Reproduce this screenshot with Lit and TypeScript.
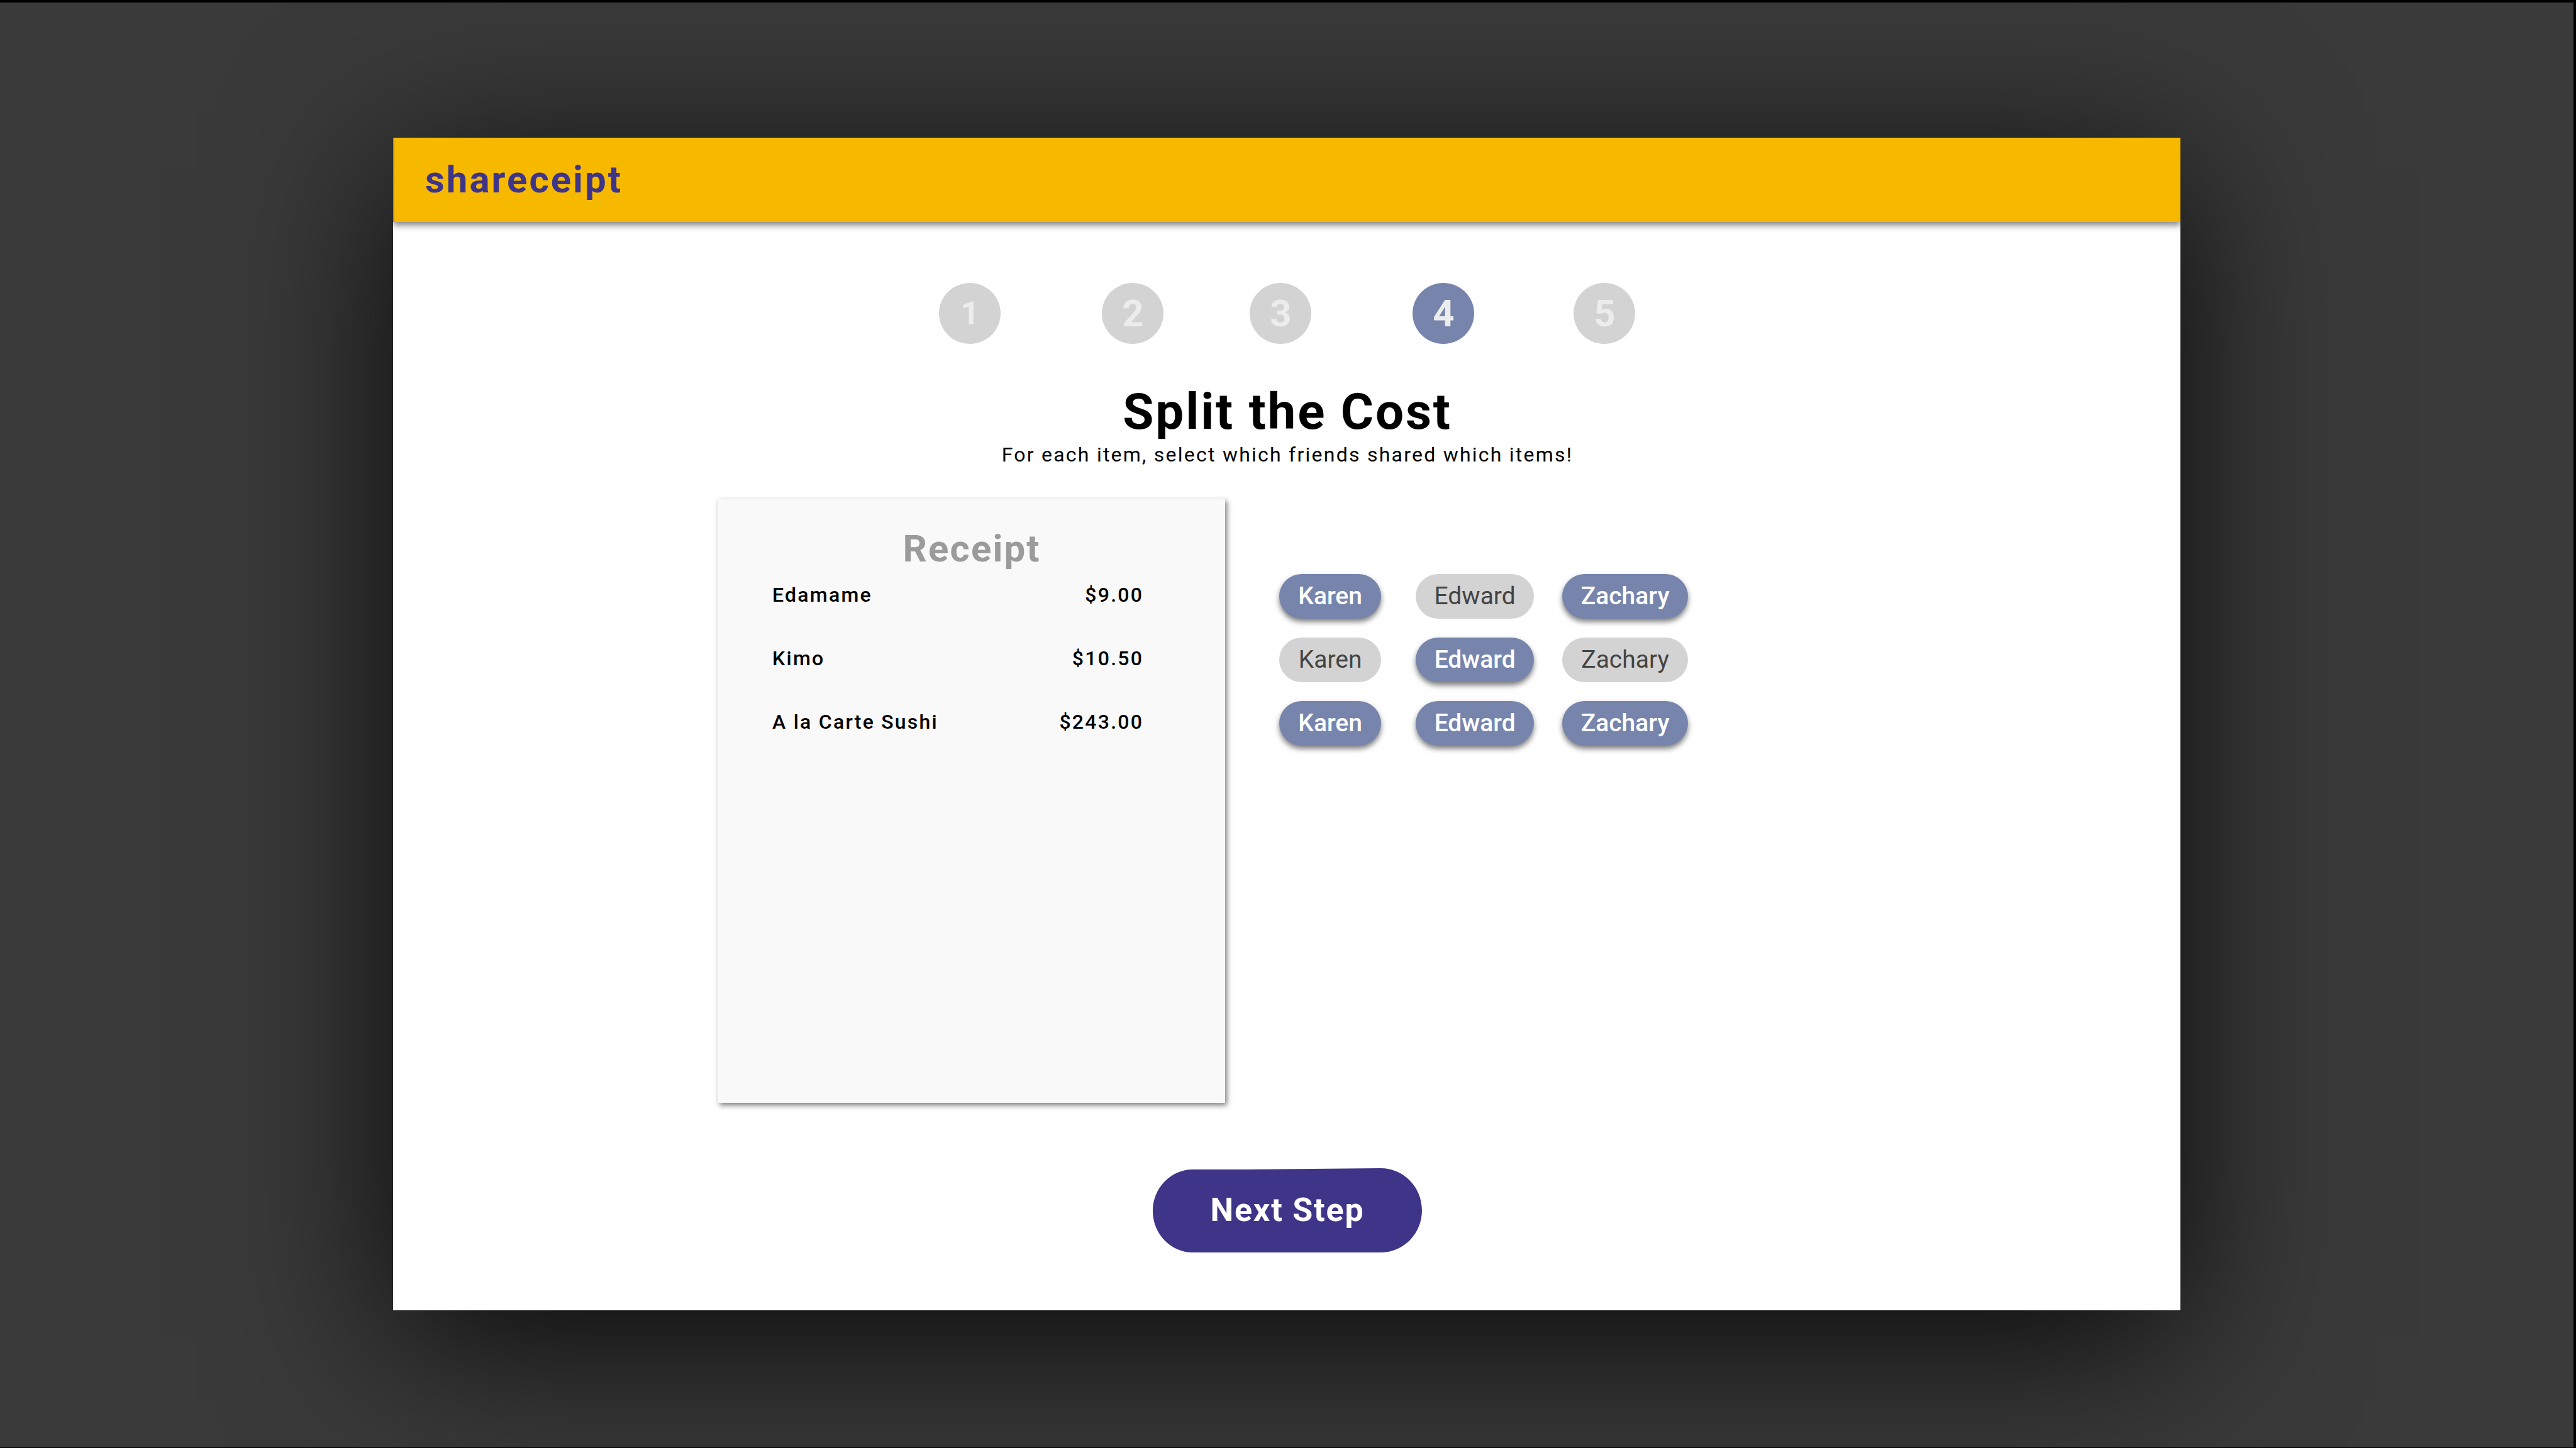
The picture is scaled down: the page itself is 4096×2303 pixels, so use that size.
import { LitElement, html, css } from "lit";
import { customElement, state } from "lit/decorators.js";
import { classMap } from "lit/directives/class-map.js";

interface ReceiptItem {
  name: string;
  price: string;
  sharedBy: string[];
}

const FRIENDS = ["Karen", "Edward", "Zachary"];
const STEPS = [1, 2, 3, 4, 5];

@customElement("app-root")
export class AppRoot extends LitElement {
  static styles = css`
    :host {
      display: block;
      font-family: Roboto, "Liberation Sans", sans-serif;
      color: #000;
    }

    * {
      box-sizing: border-box;
    }

    h1,
    h2,
    p,
    ol {
      margin: 0;
      padding: 0;
    }

    .backdrop {
      display: flex;
      flex-direction: column;
      align-items: center;
      min-height: 100vh;
      padding: 215px 0 218px;
      border: solid #000;
      border-width: 4px 4px 1px 0;
      background: #3a3a3a;
      overflow: hidden;
    }

    .window {
      display: flex;
      flex-direction: column;
      flex: 1;
      width: 69.45%;
      background: #fff;
      box-shadow: 0 50px 340px rgba(0, 0, 0, 0.85);
    }

    .bar {
      display: flex;
      align-items: center;
      height: 134px;
      padding: 0 49px;
      border-left: 2px solid #b88b07;
      background: #f7b900;
      box-shadow: 0 5px 10px rgba(0, 0, 0, 0.5);
      clip-path: inset(0 0 -30px 0);
    }

    .logo {
      font-size: 60px;
      line-height: 72px;
      font-weight: 700;
      letter-spacing: 0.05em;
      color: #3e3589;
      text-decoration: none;
    }

    .page {
      display: flex;
      flex-direction: column;
      flex: 1;
      align-items: center;
      padding: 97px 0 92px 2px;
    }

    .steps {
      display: grid;
      grid-template-columns: 259px 235px 259px 256px 98px;
      list-style: none;
    }

    .step {
      display: flex;
      align-items: center;
      justify-content: center;
      width: 98px;
      height: 97px;
      border-radius: 50%;
      background: #d3d3d3;
      color: #ececec;
      font-size: 60px;
      line-height: 72px;
      font-weight: 700;
    }

    .step.first {
      font-size: 52px;
    }

    .step.current {
      background: #7785ad;
    }

    .title {
      margin-top: 60px;
      font-size: 80px;
      line-height: 96px;
      font-weight: 700;
      letter-spacing: 0.035em;
    }

    .hint {
      font-size: 32px;
      line-height: 40px;
      letter-spacing: 0.07em;
    }

    .split {
      display: grid;
      grid-template-columns: 34.7% auto;
      justify-content: start;
      column-gap: 86px;
      flex: 1;
      width: 100%;
      margin-top: 50px;
      padding-left: 18.1%;
    }

    .receipt {
      padding: 44px 130px 44px 87px;
      background: #f9f9f9;
      box-shadow: 3px 4px 8px rgba(0, 0, 0, 0.5);
    }

    .receipt-title {
      margin-right: -44px;
      font-size: 60px;
      line-height: 72px;
      font-weight: 700;
      letter-spacing: 0.035em;
      text-align: center;
      color: #9b9b9b;
    }

    .items {
      width: 100%;
      margin-top: 17px;
      border-collapse: collapse;
      font-size: 32px;
      line-height: 40px;
      letter-spacing: 0.07em;
    }

    .items th,
    .items td {
      padding: 0 0 61px;
      font-weight: 500;
      text-align: left;
    }

    .items td {
      text-align: right;
    }

    .shares {
      display: flex;
      flex-direction: column;
      gap: 30px;
      padding-top: 120px;
    }

    .share-row {
      display: grid;
      grid-template-columns: 172px 188px 200px;
      column-gap: 45px;
    }

    .chip {
      height: 71px;
      padding: 0;
      border: 0;
      border-radius: 36px;
      background: #d3d3d3;
      color: #444;
      font-family: inherit;
      font-size: 39px;
      line-height: 71px;
      font-weight: 400;
      text-align: center;
      cursor: pointer;
    }

    .chip:first-child {
      margin-right: 10px;
    }

    .chip.on {
      background: #7785ad;
      color: #fff;
      font-weight: 500;
      box-shadow: 0 5px 8px rgba(0, 0, 0, 0.5);
    }

    .next {
      display: grid;
      place-items: center;
      width: 428px;
      height: 134px;
      margin-top: 104px;
      padding: 0;
      border: 0;
      background: none;
      color: #fff;
      font-family: inherit;
      font-size: 52px;
      line-height: 62px;
      font-weight: 700;
      letter-spacing: 0.035em;
      cursor: pointer;
    }

    .next-shape,
    .next-label {
      grid-area: 1 / 1;
    }

    .next-shape {
      display: block;
      width: 100%;
      height: 134px;
    }
  `;

  @state() private items: ReceiptItem[] = [
    { name: "Edamame", price: "$9.00", sharedBy: ["Karen", "Zachary"] },
    { name: "Kimo", price: "$10.50", sharedBy: ["Edward"] },
    { name: "A la Carte Sushi", price: "$243.00", sharedBy: ["Karen", "Edward", "Zachary"] },
  ];

  private currentStep = 4;

  private toggle(item: ReceiptItem, friend: string) {
    this.items = this.items.map((entry) =>
      entry !== item
        ? entry
        : {
            ...entry,
            sharedBy: entry.sharedBy.includes(friend)
              ? entry.sharedBy.filter((name) => name !== friend)
              : [...entry.sharedBy, friend],
          },
    );
  }

  private renderChip(item: ReceiptItem, friend: string) {
    const on = item.sharedBy.includes(friend);
    return html`<button
      type="button"
      class=${classMap({ chip: true, on })}
      aria-pressed=${on ? "true" : "false"}
      @click=${() => this.toggle(item, friend)}
    >${friend}</button>`;
  }

  render() {
    return html`
      <div class="backdrop">
        <div class="window">
          <header class="bar"><a class="logo" href="#">shareceipt</a></header>
          <main class="page">
            <ol class="steps">
              ${STEPS.map(
                (n) => html`<li
                  class=${classMap({ step: true, first: n === 1, current: n === this.currentStep })}
                >${n}</li>`,
              )}
            </ol>
            <h1 class="title">Split the Cost</h1>
            <p class="hint">For each item, select which friends shared which items!</p>
            <div class="split">
              <section class="receipt">
                <h2 class="receipt-title">Receipt</h2>
                <table class="items">
                  <tbody>
                    ${this.items.map(
                      (item) => html`<tr>
                        <th scope="row">${item.name}</th>
                        <td>${item.price}</td>
                      </tr>`,
                    )}
                  </tbody>
                </table>
              </section>
              <div class="shares">
                ${this.items.map(
                  (item) => html`<div class="share-row">
                    ${FRIENDS.map((friend) => this.renderChip(item, friend))}
                  </div>`,
                )}
              </div>
            </div>
            <button type="button" class="next">
              <svg class="next-shape" viewBox="0 0 428 134" aria-hidden="true">
                <path
                  fill="#3e3589"
                  d="M64 2 H150 L362 0 C399 0 428 30 428 67 C428 104 399 134 362 134 H64 C28 134 0 104 0 68 C0 32 28 2 64 2 Z"
                />
              </svg>
              <span class="next-label">Next Step</span>
            </button>
          </main>
        </div>
      </div>
    `;
  }
}
